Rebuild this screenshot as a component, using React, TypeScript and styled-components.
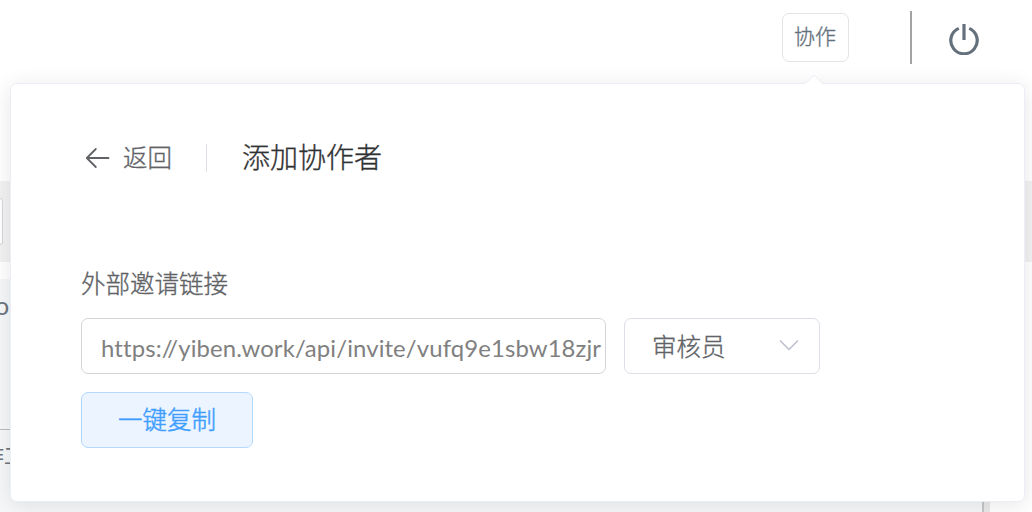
import React, {FC, ReactNode} from "react";
import styled, {createGlobalStyle} from "styled-components";

const GlobalStyle = createGlobalStyle`
    *, *::before, *::after {
        box-sizing: border-box;
    }

    body {
        margin: 0;
        overflow: hidden;
        background: #fff;
        color: #606266;
        font-family: Lato, "Noto Sans CJK SC", sans-serif;
        font-weight: 300;
        -webkit-text-stroke: 0.35px;
    }
`

const Page = styled.div`
    position: relative;
    display: flex;
    flex-direction: column;
    height: 512px;
    overflow: hidden;
`

const Header = styled.header`
    display: flex;
    flex: none;
    justify-content: flex-end;
    height: 181px;
    padding: 11px 52px 0 0;
`

const CollabButton = styled.button`
    width: 67px;
    height: 49px;
    margin: 2px 61px 0 0;
    padding: 0 1px 3px 0;
    border: 1px solid #e2e4e8;
    border-radius: 7px;
    background: #fff;
    color: #64707c;
    font: inherit;
    font-size: 21px;
    line-height: 30px;
`

const HeaderDivider = styled.div`
    width: 2px;
    height: 53px;
    margin-right: 36px;
    background: #a3a3a6;
`

const PowerIcon = styled.svg`
    width: 32px;
    height: 32px;
    margin-top: 12px;
`

const FilterBar = styled.div`
    display: flex;
    flex: none;
    align-items: center;
    height: 81px;
    background: #f2f2f2;
`

const FilterField = styled.div`
    width: 3px;
    height: 47px;
    border: 1px solid #d5d8e0;
    border-left: 0;
    border-radius: 0 6px 6px 0;
    background: #fff;
`

const Workspace = styled.div`
    display: flex;
    flex: 1;
    padding-top: 17px;
`

const Sheet = styled.div`
    width: 984px;
    border-right: 2px solid #c4c6c8;
    background: #f5f7f9;
    color: #6b7580;
    font-weight: 400;
    -webkit-text-stroke: 0;
`

const SheetRow = styled.div<{ $height: number }>`
    display: flex;
    align-items: center;
    height: ${(props) => props.$height}px;
    overflow: hidden;
    white-space: nowrap;

    & + & {
        border-top: 1px solid #b9bbbd;
    }
`

const Clipped = styled.span<{ $shift: number; $lift: number; $size: number }>`
    margin-left: ${(props) => props.$shift}px;
    margin-bottom: ${(props) => props.$lift}px;
    font-size: ${(props) => props.$size}px;
`

const ScrollTrack = styled.div`
    width: 6px;
    background: #e9e9e9;
`

const Popover = styled.section`
    position: absolute;
    top: 83px;
    left: 10px;
    width: 1015px;
    height: 419px;
    padding: 53px 70px 0;
    border: 1px solid #ebeef5;
    border-radius: 7px;
    background: #fff;
    box-shadow: 0 3px 21px rgba(0, 0, 0, 0.1);
`

const PopoverArrow = styled.svg`
    position: absolute;
    top: -9px;
    left: 793px;
    width: 20px;
    height: 10px;
`

const PageHeader = styled.div`
    display: flex;
    align-items: center;
    height: 42px;
`

const BackArrow = styled.svg`
    width: 25px;
    height: 22px;
    margin: 0 13px 0 4px;
`

const BackText = styled.span`
    width: 83px;
    padding-bottom: 4px;
    font-size: 24.5px;
`

const HeaderRule = styled.div`
    width: 1px;
    height: 28px;
    margin-right: 35px;
    background: #dcdfe6;
`

const Title = styled.span`
    padding-bottom: 4px;
    color: #303133;
    font-size: 28px;
`

const Label = styled.div`
    height: 36px;
    margin-top: 87px;
    font-size: 24.5px;
    line-height: 36px;
`

const Fields = styled.div`
    display: flex;
    gap: 18px;
    margin-top: 16px;
`

const LinkInput = styled.input`
    width: 525px;
    height: 56px;
    padding: 2px 0 0 19px;
    border: 1px solid #d3d5d9;
    border-radius: 7px;
    outline: 0;
    background: #fff;
    color: #808080;
    font-family: Lato, sans-serif;
    font-size: 23.9px;
    font-weight: 400;
    letter-spacing: 0.12px;
    -webkit-text-stroke: 0;
`

const RoleSelect = styled.div`
    display: flex;
    align-items: center;
    justify-content: space-between;
    width: 196px;
    height: 56px;
    padding: 0 20px 2px 27px;
    border: 1px solid #dcdfe6;
    border-radius: 7px;
    font-size: 24.5px;
`

const Chevron = styled.svg`
    width: 20px;
    height: 12px;
`

const CopyButton = styled.button`
    width: 172px;
    height: 56px;
    margin-top: 18px;
    padding: 0 0 4px;
    border: 1px solid #b3d8ff;
    border-radius: 7px;
    background: #ecf5ff;
    color: #409eff;
    font: inherit;
    font-size: 24.5px;
    -webkit-text-stroke: 0.5px;
`

interface IFormItem {
    label: string
    children?: ReactNode
}

const FormItem: FC<IFormItem> = ({label, children}) => {
    return (
        <>
            <Label>{label}</Label>
            <Fields>{children}</Fields>
        </>
    )
}

const App: FC = () => {
    return (
        <Page>
            <GlobalStyle/>
            <Header>
                <CollabButton>协作</CollabButton>
                <HeaderDivider/>
                <PowerIcon viewBox="0 0 32 32" fill="none" stroke="#64707c" strokeWidth="3.2">
                    <path d="M10.8 5.4A13.2 13.2 0 1 0 21.2 5.4"/>
                    <path d="M16 1V17"/>
                </PowerIcon>
            </Header>
            <FilterBar>
                <FilterField/>
            </FilterBar>
            <Workspace>
                <Sheet>
                    <SheetRow $height={150}>
                        <Clipped $shift={-5} $lift={98} $size={25}>o</Clipped>
                    </SheetRow>
                    <SheetRow $height={51}>
                        <Clipped $shift={-17} $lift={3} $size={21}>作工</Clipped>
                    </SheetRow>
                </Sheet>
                <ScrollTrack/>
            </Workspace>
            <Popover>
                <PopoverArrow viewBox="0 0 20 10">
                    <path d="M0 10L1 9L8.9 1.3Q10 .3 11.1 1.3L19 9L20 10Z" fill="#fff"/>
                    <path d="M1 9L8.9 1.3Q10 .3 11.1 1.3L19 9" fill="none" stroke="#ebeef5"/>
                </PopoverArrow>
                <PageHeader>
                    <BackArrow viewBox="0 0 25 22" fill="none" stroke="#606266" strokeWidth="1.8" strokeLinecap="round" strokeLinejoin="round">
                        <path d="M23.5 11H2M10.8 2L1.8 11L10.8 20"/>
                    </BackArrow>
                    <BackText>返回</BackText>
                    <HeaderRule/>
                    <Title>添加协作者</Title>
                </PageHeader>
                <FormItem label="外部邀请链接">
                    <LinkInput readOnly value="https://yiben.work/api/invite/vufq9e1sbw18zjr"/>
                    <RoleSelect>
                        审核员
                        <Chevron viewBox="0 0 20 12" fill="none" stroke="#c0c4cc" strokeWidth="1.7" strokeLinecap="round" strokeLinejoin="round">
                            <path d="M1.5 2L10 10.5L18.5 2"/>
                        </Chevron>
                    </RoleSelect>
                </FormItem>
                <CopyButton>一键复制</CopyButton>
            </Popover>
        </Page>
    )
}

export default App
